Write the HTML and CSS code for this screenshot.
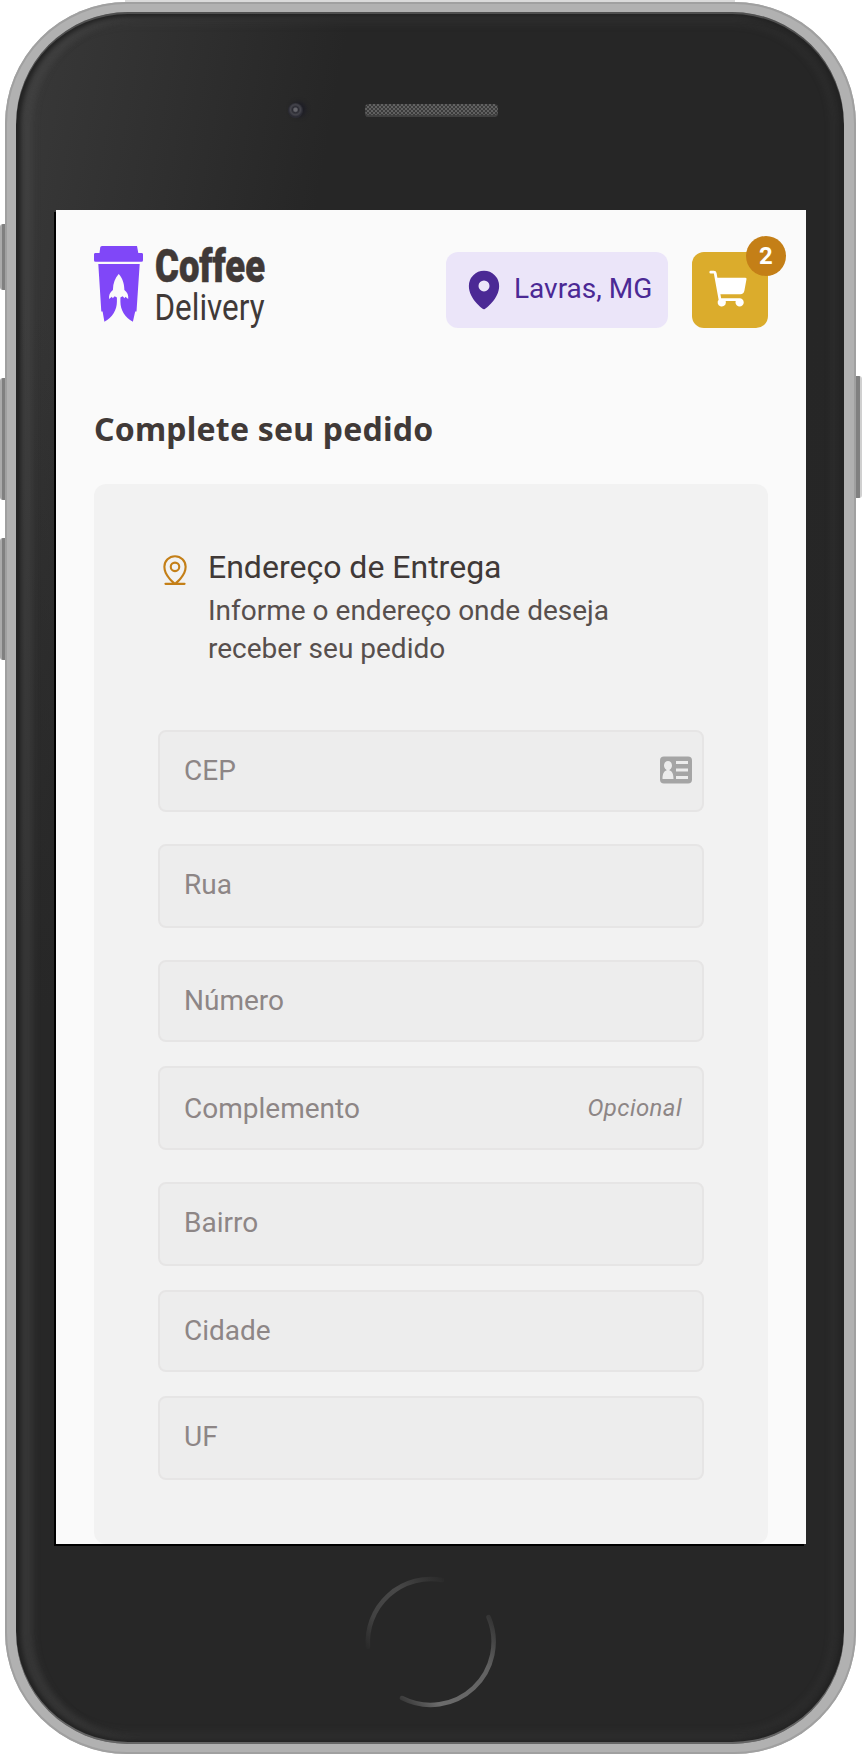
FILE: index.html
```html
<!DOCTYPE html>
<html lang="pt-BR">
<head>
<meta charset="utf-8">
<title>Coffee Delivery</title>
<link rel="stylesheet" href="styles.css">
</head>
<body>
<div class="phone">
  <i class="key key-mute"></i><i class="key key-up"></i><i class="key key-down"></i><i class="key key-power"></i>
  <div class="shell">
    <div class="bezel">
      <div class="top">
        <span class="camera"></span>
        <span class="speaker"></span>
      </div>
      <main class="screen">
        <header class="header">
          <svg class="logo" width="171" height="84" viewBox="94 246 171 84">
            <g fill="#8047f8">
              <path d="M101 246h36l1.300 7h3.700q1 0 1 1.500v5.700q0 1.500-1.500 1.500h-46q-1.500 0-1.500-1.500v-5.700q0-1.500 1-1.500h4.500l.7-5.500q.1-1.500 1.800-1.500z"/>
              <path d="M98.300 264h41.400l-3.200 47.500h-1.300l-2.300 10.200c-8-4-12.500-12-12.500-20v-4.200l2.200-1.200 2 2 .800-1.500 2.800 2.200c.4-4-.6-6.500-3.800-9-.2-7-2-12-5.700-16-3.700 4-5.600 9-5.800 16-3.200 2.500-4.200 5-3.800 9l2.800-2.200.8 1.500 2-2 2.200 1.200v4.200c0 8-4.500 16-12.500 20l-1.800-10.200h-1.300z"/>
            </g>
            <text class="logo-coffee" x="155" y="282" textLength="110" lengthAdjust="spacingAndGlyphs">Coffee</text>
            <text class="logo-delivery" x="154.500" y="320" textLength="110" lengthAdjust="spacingAndGlyphs">Delivery</text>
          </svg>
          <div class="actions">
            <div class="location">
              <svg width="44" height="44" viewBox="0 0 256 256" fill="currentColor"><path fill-rule="evenodd" d="M128 16a88.100 88.100 0 0 0-88 88c0 75.300 80 132.200 84 135a8 8 0 0 0 8 0C136 236.200 216 179.300 216 104a88.100 88.100 0 0 0-88-88Zm0 56a32 32 0 1 1-32 32 32 32 0 0 1 32-32Z"/></svg>
              <span>Lavras, MG</span>
            </div>
            <div class="cart">
              <svg width="44" height="44" viewBox="0 0 256 256" fill="currentColor"><path d="M223.900 65.400l-12.200 66.900A24 24 0 0 1 188.100 152H72.100l4.400 24H184a24 24 0 1 1-24 24 23.600 23.600 0 0 1 1.400-8H102.600a23.600 23.600 0 0 1 1.400 8 24 24 0 1 1-42.200-15.600L34.100 32H16a8 8 0 0 1 0-16H34.100A16 16 0 0 1 49.800 29.100L54.700 56H216a7.900 7.900 0 0 1 6.100 2.900A7.700 7.700 0 0 1 223.900 65.400Z"/></svg>
              <span class="badge">2</span>
            </div>
          </div>
        </header>
        <h1 class="title">Complete seu pedido</h1>
        <section class="card">
          <div class="intro">
            <svg width="34" height="34" viewBox="0 0 256 256" fill="#c47f17"><path d="M200 224H150.540A266.560 266.560 0 0 0 174 200.250c27.450-31.570 42-64.850 42-96.250a88 88 0 0 0-176 0c0 31.400 14.510 64.680 42 96.250A266.560 266.560 0 0 0 105.460 224H56a8 8 0 0 0 0 16H200a8 8 0 0 0 0-16ZM56 104a72 72 0 0 1 144 0c0 57.230-55.470 105-72 118C111.470 209 56 161.230 56 104Zm112 0a40 40 0 1 0-40 40A40 40 0 0 0 168 104Zm-64 0a24 24 0 1 1 24 24A24 24 0 0 1 104 104Z"/></svg>
            <div>
              <h2 class="intro-title">Endereço de Entrega</h2>
              <p class="intro-text">Informe o endereço onde deseja<br>receber seu pedido</p>
            </div>
          </div>
          <form class="form">
            <div class="field">
              <span>CEP</span>
              <svg class="contact" width="32" height="28" viewBox="0 0 32 28"><rect y=".5" width="32" height="27" rx="4" fill="#a5a5a5"/><g fill="#ececec"><ellipse cx="8" cy="9.500" rx="4" ry="4.500"/><path d="M6.500 13h3v1.500c2.500.5 4 3 4 8.500h-11c0-5.500 1.500-8 4-8.500z"/><path d="M16 5h12v3H16zM16 12.500h12v3H16zM16 20h12v3H16z"/></g></svg>
            </div>
            <div class="field tall"><span>Rua</span></div>
            <div class="group">
              <div class="field"><span>Número</span></div>
              <div class="field tall low"><span>Complemento</span><em>Opcional</em></div>
            </div>
            <div class="group">
              <div class="field tall"><span>Bairro</span></div>
              <div class="field"><span>Cidade</span></div>
              <div class="field tall"><span>UF</span></div>
            </div>
          </form>
        </section>
      </main>
      <div class="bottom">
        <svg width="134" height="134" viewBox="-67 -67 134 134" fill="none" stroke-width="4.500" stroke-linecap="round">
          <defs>
            <linearGradient id="arcTop" gradientUnits="userSpaceOnUse" x1="-64" y1="8" x2="16" y2="-62"><stop offset="0" stop-color="#282828"/><stop offset=".25" stop-color="#424242"/><stop offset=".6" stop-color="#484848"/><stop offset="1" stop-color="#282828"/></linearGradient>
            <linearGradient id="arcLow" gradientUnits="userSpaceOnUse" x1="58" y1="-28" x2="-32" y2="55"><stop offset="0" stop-color="#333"/><stop offset=".3" stop-color="#616161"/><stop offset=".8" stop-color="#6b6b6b"/><stop offset="1" stop-color="#3a3a3a"/></linearGradient>
          </defs>
          <path stroke="url(#arcTop)" d="M-63 5A63 63 0 0 1 11-62"/>
          <path stroke="url(#arcLow)" d="M57.500-25A63 63 0 0 1-29 56"/>
        </svg>
      </div>
    </div>
  </div>
</div>
</body>
</html>
```
FILE: styles.css
```css
* { box-sizing: border-box; }
body { margin: 0; background: #fff; font-family: Roboto, "Liberation Sans", sans-serif; }
h1, h2, p { margin: 0; font-weight: 400; }
svg { display: block; flex: none; }

.phone { position: relative; width: 862px; height: 1754px; padding: 2px 6px 0 5px; overflow: hidden; background: linear-gradient(#dadada, #dadada) 125px 0 / 610px 2px no-repeat, #fff; }
.shell { position: relative; width: 851px; height: 1752px; padding: 10px 12px 10px 11px; border-radius: 122px; background: #b1b1b1; box-shadow: inset 0 0 0 2px #a0a0a0; }
.bezel {
  height: 1732px; border-radius: 112px; overflow: hidden;
  background: linear-gradient(to bottom, transparent 300px, #272727 1000px), linear-gradient(100deg, #393939 0, #303030 160px, #262626 330px);
  box-shadow: inset 0 2px 0 #505050, inset 0 -2px 0 #656565, inset 0 0 4px 5px #232323, inset 12px 0 6px 6px rgba(80, 80, 80, .3), inset 0 0 6px 14px rgba(80, 80, 80, .14);
}
.key { position: absolute; left: 0; width: 7px; border-radius: 3px 0 0 3px; background: linear-gradient(to right, #aaa 2px, #808080 2px); }
.key-mute { top: 224px; height: 66px; }
.key-up { top: 378px; height: 122px; }
.key-down { top: 538px; height: 122px; }
.key-power { top: 376px; left: 854px; width: 8px; height: 122px; border-radius: 0 3px 3px 0; background: linear-gradient(to right, #808080 6px, #d0d0d0 6px); }

.top { height: 198px; display: flex; align-items: flex-start; padding-top: 92px; }
.camera { width: 15px; height: 15px; margin: -1px 0 0 272px; border-radius: 50%; background: radial-gradient(circle at 50% 45%, #66666c 0 1.5px, #2b2b33 3px, #45454c 5px, #2a2a33 7px); box-shadow: 3px -1px 4px #1d1d26; }
.speaker { width: 133px; height: 13px; margin-left: 62px; border-radius: 4px; background: repeating-conic-gradient(#3b3b3b 0 25%, #616161 0 50%) 0 0 / 4px 4px; box-shadow: inset 0 -2px 1px #404040; }
.bottom { display: flex; justify-content: center; padding: 31px 0 0 2px; }

.screen { width: 750px; height: 1334px; margin-left: 40px; padding: 36px 38px 0; background: #fafafa; box-shadow: -2px 2px 0 #000; color: #403937; }
.header { display: flex; justify-content: space-between; align-items: flex-start; height: 164px; }
.logo { overflow: visible; }
.logo-coffee { font-weight: 900; font-size: 47px; fill: #403937; stroke: #403937; stroke-width: .6px; }
.logo-delivery { font-weight: 400; font-size: 36px; fill: #403937; }
.actions { display: flex; gap: 24px; padding-top: 6px; }
.location { display: flex; align-items: center; gap: 8px; width: 222px; height: 76px; padding-left: 16px; border-radius: 12px; background: #ebe5f9; color: #4b2995; font-size: 28px; white-space: nowrap; }
.location span { padding-bottom: 4px; }
.cart { position: relative; display: flex; align-items: center; justify-content: center; width: 76px; height: 76px; border-radius: 12px; background: #dbac2c; color: #fff; }
.badge { position: absolute; top: -16px; right: -18px; width: 40px; height: 40px; border-radius: 50%; background: #c47f17; font-size: 24px; font-weight: 700; line-height: 40px; text-align: center; }
.title { height: 74px; font: 700 32px/37px "Noto Sans", sans-serif; letter-spacing: .2px; white-space: nowrap; }

.card { width: 674px; height: 1060px; padding: 64px; border-radius: 12px; background: #f2f2f2; }
.intro { display: flex; gap: 16px; height: 182px; padding-top: 3px; }
.intro svg { margin-top: 2px; }
.intro-title { font-size: 32px; line-height: 32px; white-space: nowrap; }
.intro-text { margin-top: 9px; font-size: 28px; line-height: 38px; color: #574f4d; white-space: nowrap; }
.form { display: grid; gap: 32px; }
.group { display: grid; gap: 24px; }
.field { display: flex; justify-content: space-between; align-items: center; height: 82px; padding: 0 10px 2px 24px; border: 2px solid #e6e5e5; border-radius: 8px; background: #ededed; color: #8d8686; font-size: 28px; }
.tall { height: 84px; padding-bottom: 4px; }
.low { padding: 0 20px 0 24px; }
.field em { font-size: 24px; letter-spacing: .4px; }
```
